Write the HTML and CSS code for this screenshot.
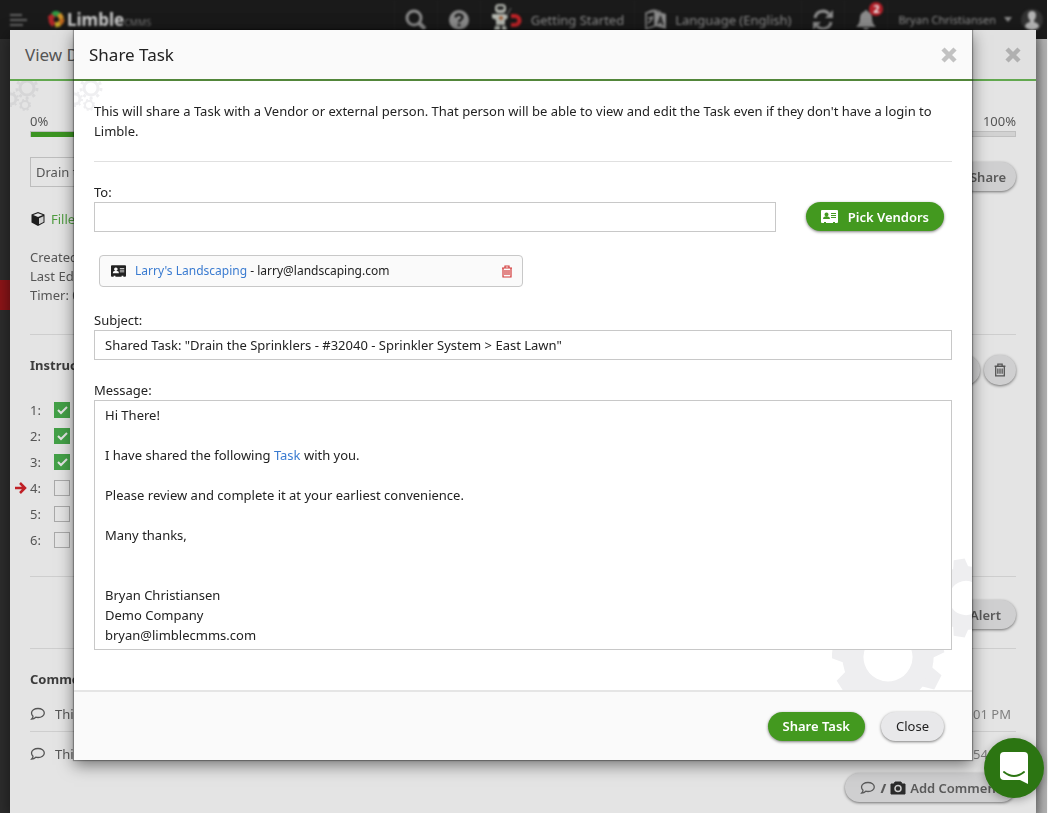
FILE: index.html
```html
<!DOCTYPE html>
<html lang="en">
<head>
  <meta charset="UTF-8">
  <meta name="viewport" content="width=device-width, initial-scale=1">
  <title>Limble CMMS - Share Task</title>
  <link rel="stylesheet" href="styles.css">
</head>
<body>
  <!-- Shared icons -->
  <svg class="icon-defs" aria-hidden="true">
    <symbol id="gear-big" viewBox="-60 -60 120 120">
      <circle r="35" fill="none" stroke="currentColor" stroke-width="21"/>
      <g fill="currentColor">
        <path id="tooth" d="M43-11 56-8V8L43 11z"/>
        <use href="#tooth" transform="rotate(40)"/>
        <use href="#tooth" transform="rotate(80)"/>
        <use href="#tooth" transform="rotate(120)"/>
        <use href="#tooth" transform="rotate(160)"/>
        <use href="#tooth" transform="rotate(200)"/>
        <use href="#tooth" transform="rotate(240)"/>
        <use href="#tooth" transform="rotate(280)"/>
        <use href="#tooth" transform="rotate(320)"/>
      </g>
    </symbol>
    <symbol id="gears-small" viewBox="0 0 36 32">
      <g fill="none" stroke="currentColor">
        <circle cx="17" cy="7" r="7" stroke-width="3"/>
        <circle cx="17" cy="7" r="10" stroke-width="3" stroke-dasharray="3 4"/>
        <circle cx="1" cy="18" r="5" stroke-width="3"/>
        <circle cx="1" cy="18" r="7" stroke-width="2" stroke-dasharray="2 3"/>
        <circle cx="15" cy="24" r="4" stroke-width="2"/>
        <circle cx="15" cy="24" r="5" stroke-width="2" stroke-dasharray="2 2"/>
      </g>
    </symbol>
    <symbol id="times" viewBox="0 0 16 16">
      <path d="M2 2l12 12M14 2L2 14" stroke="currentColor" stroke-width="4.500"/>
    </symbol>
    <symbol id="card" viewBox="0 0 17 13">
      <path fill="currentColor" fill-rule="evenodd" d="M1 0h15q1 0 1 1v11q0 1-1 1h-2v-1h-2v1H5v-1H3v1H1q-1 0-1-1V1q0-1 1-1zM5.500 2.500a2 2 0 1 0 .01 0zM2 9h7q0-2.500-2-2.500H4Q2 6.500 2 9zM10 3h5v1h-5zM10 5h5v1h-5zM10 7h5v1h-5z"/>
    </symbol>
    <symbol id="trash" viewBox="0 0 12 13">
      <path d="M1 3h10M4 3V1h4v2M2 3v9h8V3M4 5v5M6 5v5M8 5v5" fill="none" stroke="currentColor" stroke-width="1.200"/>
    </symbol>
    <symbol id="comment" viewBox="0 0 16 14">
      <path d="M8 1.500c3.600 0 6.300 2 6.300 4.500S11.600 10.500 8 10.500c-.8 0-1.500-.1-2.200-.3C4.800 11.200 3.400 12 1.700 12c.8-.8 1.300-1.700 1.300-2.800C2 8.300 1.500 7.200 1.500 6 1.500 3.500 4.400 1.500 8 1.500z" fill="none" stroke="currentColor" stroke-width="1.300"/>
    </symbol>
  </svg>

  <header class="topbar">
    <button class="menu-btn" type="button" aria-label="Menu">
      <svg width="17" height="12" viewBox="0 0 17 12"><path d="M0 1h12M0 6h17M0 11h13" stroke="currentColor" stroke-width="2"/></svg>
    </button>
    <a class="logo" href="#">
      <svg width="17" height="17" viewBox="0 0 17 17" fill="none" stroke-width="5">
        <path d="M6 14Q3 12 3 8" stroke="#b3262a"/>
        <path d="M1 8l5-4" stroke="#b3262a"/>
        <path d="M5 4q3-3 6 0" stroke="#2f9a45"/>
        <path d="M11 3l3 5" stroke="#d0922a"/>
        <path d="M14 8q0 3-3 5" stroke="#c06a1f"/>
        <path d="M7 14l5-1" stroke="#c9a92a"/>
      </svg>
      <span class="logo-name">Limble</span><span class="logo-sub">CMMS</span>
    </a>
    <nav class="topnav">
      <a href="#" aria-label="Search">
        <svg width="22" height="22" viewBox="0 0 22 22" fill="none" stroke="currentColor"><circle cx="9" cy="9" r="7" stroke-width="3"/><path d="M14 14l6 6" stroke-width="4"/></svg>
      </a>
      <a href="#" aria-label="Help">
        <svg width="22" height="22" viewBox="0 0 22 22"><circle cx="11" cy="11" r="10" fill="currentColor"/><path d="M7.500 8.500q.5-3 3.500-3t3.500 2.700q0 1.600-2 2.800-1.500.9-1.500 2.200" fill="none" stroke="#1a1a1a" stroke-width="2.400"/><path d="M9.700 14.800h2.600v2.400H9.700z" fill="#1a1a1a"/></svg>
      </a>
      <a href="#">
        <svg width="32" height="32" viewBox="0 0 32 32">
          <g fill="#b4b7b0"><rect x="4" y="0" width="11" height="9" rx="4"/><path d="M5 10h9l3 2-1 3-2 1v5H5v-5l-4-2v-4h4zM4 22h5v5H3zM11 22h4l1 5h-5z"/></g>
          <rect x="6" y="2" width="7" height="4" rx="2" fill="#2a2a2a"/>
          <circle cx="10" cy="14" r="2" fill="#a0603c"/>
          <path d="M16 11l4-7" stroke="#555" stroke-width="1.500"/>
          <path d="M20 12h4a4 4 0 0 1 0 9h-4" fill="none" stroke="#c02428" stroke-width="4"/>
        </svg>
        <span>Getting Started</span>
      </a>
      <a href="#">
        <svg width="22" height="22" viewBox="0 0 22 22"><path d="M1 4l9-2v15l-9 3z" fill="none" stroke="currentColor" stroke-width="1.500"/><path d="M3 9h5M7 7q0 5-4 7" fill="none" stroke="currentColor" stroke-width="1.500"/><path d="M10 2l11 3v15l-11-3z" fill="currentColor"/><path d="M13 15l2.500-7 2.500 8M14 13h3" fill="none" stroke="#1a1a1a" stroke-width="1.500"/><path d="M3 3q5-4 13 0" fill="none" stroke="currentColor"/></svg>
        <span>Language (English)</span>
      </a>
      <a href="#" aria-label="Refresh">
        <svg width="22" height="22" viewBox="0 0 22 22"><path d="M3 9a8 8 0 0 1 14-4M19 13a8 8 0 0 1-14 4" fill="none" stroke="currentColor" stroke-width="3"/><path d="M21 1v8h-8zM1 21v-8h8z" fill="currentColor"/></svg>
      </a>
      <a class="bell" href="#" aria-label="Notifications">
        <svg width="22" height="22" viewBox="0 0 22 22"><path d="M11 1q1.500 0 1.500 1.600Q17 4 17 9q0 6 4 9H1q4-3 4-9 0-5 4.500-6.400Q9.500 1 11 1zM8 19h6q-1 3-3 3t-3-3z" fill="currentColor"/></svg>
        <span class="badge">2</span>
      </a>
      <a class="user" href="#">
        <span>Bryan Christiansen</span>
        <svg width="8" height="5" viewBox="0 0 8 5"><path d="M0 0h8L4 5z" fill="currentColor"/></svg>
        <svg class="avatar" width="24" height="24" viewBox="0 0 24 24"><circle cx="12" cy="12" r="11" fill="#333"/><path d="M12 3q4 0 4 4.500 0 3-2 5v1.500q5 1 5 5Q16 22 12 22t-7-3q0-4 5-5v-1.500q-2-2-2-5Q8 3 12 3z" fill="#b4b4b4"/></svg>
      </a>
    </nav>
  </header>
  <aside class="sidebar"><div class="sidebar-active"></div></aside>

  <!-- Task behind the share dialog -->
  <div class="overlay overlay-view">
    <section class="modal view-modal">
      <div class="modal-header">
        <h2>View D</h2>
        <button class="close-x" type="button" aria-label="Close task"><svg width="16" height="16"><use href="#times"/></svg></button>
      </div>
      <div class="view-body">
        <svg class="gears-corner" width="36" height="32"><use href="#gears-small"/></svg>
        <div class="progress-labels"><span>0%</span><span>100%</span></div>
        <div class="progress"><div class="progress-done"></div></div>
        <div class="title-row">
          <input class="title-input" type="text" value="Drain the Sprinklers" aria-label="Task name">
          <button class="btn btn-dim" type="button">Share</button>
        </div>
        <div class="filled">
          <svg width="16" height="16" viewBox="0 0 16 16"><path d="M8 1l6.500 2.500v8L8 15l-6.500-3.500v-8z" fill="#1d1d1d"/><path d="M8 2.200l4.800 1.800L8 6 3.200 4z" fill="#e4e4e4"/><path d="M9 7.300l4.500-2v5.600L9 13.300z" fill="#d0d0d0"/></svg>
          <span>Filled</span>
        </div>
        <div class="meta">
          <div>Created</div>
          <div>Last Edited</div>
          <div>Timer: 0</div>
        </div>
        <hr>
        <div class="instructions-head">
          <h3>Instructions</h3>
          <div class="round-btns">
            <button class="btn-round" type="button" aria-label="Edit instructions"></button>
            <button class="btn-round" type="button" aria-label="Delete instructions"><svg width="14" height="14"><use href="#trash"/></svg></button>
          </div>
        </div>
        <ol class="steps">
          <li><label for="step1">1:</label><input id="step1" type="checkbox" checked></li>
          <li><label for="step2">2:</label><input id="step2" type="checkbox" checked></li>
          <li><label for="step3">3:</label><input id="step3" type="checkbox" checked></li>
          <li><svg class="arrow" width="12" height="12" viewBox="0 0 12 12"><path d="M0 6h10M5 1l5 5-5 5" fill="none" stroke="#c02026" stroke-width="2.500"/></svg><label for="step4">4:</label><input id="step4" type="checkbox"></li>
          <li><label for="step5">5:</label><input id="step5" type="checkbox"></li>
          <li><label for="step6">6:</label><input id="step6" type="checkbox"></li>
        </ol>
        <hr>
        <div class="alert-row"><button class="btn btn-dim" type="button">Alert</button></div>
        <hr>
        <h3>Comments</h3>
        <div class="comment">
          <svg width="16" height="14"><use href="#comment"/></svg>
          <span>This</span>
          <time>01 PM</time>
        </div>
        <div class="comment">
          <svg width="16" height="14"><use href="#comment"/></svg>
          <span>This</span>
          <time>54 PM</time>
        </div>
        <div class="add-row">
          <button class="btn btn-dim" type="button">
            <svg width="16" height="14"><use href="#comment"/></svg>
            <b>/</b>
            <svg width="16" height="14" viewBox="0 0 16 14"><path d="M1 3h3l1-2h6l1 2h3v10H1z" fill="#2b2b2b" stroke="#2b2b2b" stroke-linejoin="round"/><circle cx="8" cy="7.500" r="3" fill="none" stroke="#ccc" stroke-width="1.500"/></svg>
            <span>Add Comment</span>
          </button>
        </div>
      </div>
    </section>
  </div>

  <div class="overlay overlay-share">
    <section class="modal share-modal" role="dialog" aria-labelledby="share-title">
      <div class="modal-header">
        <h2 id="share-title">Share Task</h2>
        <button class="close-x" type="button" aria-label="Close"><svg width="16" height="16"><use href="#times"/></svg></button>
      </div>
      <form class="share-body" id="share-form">
        <svg class="gears-corner" width="36" height="32"><use href="#gears-small"/></svg>
        <svg class="gears-bottom" width="140" height="132" viewBox="0 0 140 132">
          <g transform="translate(56 99) rotate(27)"><use href="#gear-big" x="-60" y="-60" width="120" height="120"/></g>
          <g transform="translate(134 40) rotate(20) scale(0.7)"><use href="#gear-big" x="-60" y="-60" width="120" height="120"/></g>
        </svg>
        <p class="intro">This will share a Task with a Vendor or external person. That person will be able to view and edit the Task even if they don't have a login to Limble.</p>
        <hr>
        <div class="to-row">
          <div class="field">
            <label for="to">To:</label>
            <input id="to" type="text">
          </div>
          <button class="btn btn-green" type="button">
            <svg width="17" height="13"><use href="#card"/></svg>
            <span>Pick Vendors</span>
          </button>
        </div>
        <div class="recipient">
          <svg width="15" height="12"><use href="#card"/></svg>
          <span><a href="#">Larry's Landscaping</a> - larry@landscaping.com</span>
          <button class="remove" type="button" aria-label="Remove recipient"><svg width="12" height="13"><use href="#trash"/></svg></button>
        </div>
        <div class="field">
          <label for="subject">Subject:</label>
          <input id="subject" type="text" value="Shared Task: &quot;Drain the Sprinklers - #32040 - Sprinkler System &gt; East Lawn&quot;">
        </div>
        <div class="field">
          <label id="message-label">Message:</label>
          <div class="message" contenteditable="true" role="textbox" aria-multiline="true" aria-labelledby="message-label">
            <div>Hi There!</div>
            <div><br></div>
            <div>I have shared the following <a href="#">Task</a> with you.</div>
            <div><br></div>
            <div>Please review and complete it at your earliest convenience.</div>
            <div><br></div>
            <div>Many thanks,</div>
            <div><br></div>
            <div><br></div>
            <div>Bryan Christiansen</div>
            <div>Demo Company</div>
            <div>bryan@limblecmms.com</div>
          </div>
        </div>
      </form>
      <div class="modal-footer">
        <button class="btn btn-green" type="submit" form="share-form">Share Task</button>
        <button class="btn btn-grey" type="button">Close</button>
      </div>
    </section>
  </div>

  <button class="chat" type="button" aria-label="Open chat">
    <svg width="28" height="33" viewBox="0 0 28 33"><path d="M4 0h20q4 0 4 4v28l-8-4H4q-4 0-4-4V4q0-4 4-4z" fill="#fff"/><path d="M4 20q10 8 20 0" fill="none" stroke="#2c7512" stroke-width="2" stroke-linecap="round"/></svg>
  </button>
</body>
</html>
```
FILE: styles.css
```css
* {
  box-sizing: border-box;
}
body {
  margin: 0;
  min-height: 100vh;
  font-family: "Noto Sans", "Open Sans", sans-serif;
  font-size: 13px;
  line-height: 20px;
  color: #333;
  background: linear-gradient(to left, #fff 1px, #b4b4b4 1px, #b4b4b4 5px, #9c9c9c 12px);
  overflow: hidden;
}
input,
button {
  font: inherit;
  color: inherit;
}
button {
  cursor: pointer;
}
a {
  color: #3a7bd0;
  text-decoration: none;
}
hr {
  height: 1px;
  margin: 0;
  border: 0;
  background-color: #e0e0e0;
}
h2 {
  margin: 0;
  font-size: 17px;
  font-weight: 400;
  line-height: 24px;
}
h3 {
  margin: 0;
  font-size: 13px;
  font-weight: 700;
}
.icon-defs {
  position: absolute;
  width: 0;
  height: 0;
}

/* Top bar */
.topbar {
  display: flex;
  align-items: center;
  height: 39px;
  margin-right: 1px;
  padding-left: 10px;
  background-color: #1a1a1a;
  color: #757575;
}
.topbar > * {
  filter: blur(1px);
}
.menu-btn {
  display: flex;
  padding: 0;
  border: 0;
  background: none;
  color: #666;
}
.logo {
  display: flex;
  align-items: center;
  margin-left: 21px;
  color: #d0d0d0;
}
.logo-name {
  margin-left: 2px;
  font-size: 17px;
  font-weight: 700;
}
.logo-sub {
  padding-top: 6px;
  font-size: 9px;
  color: #777;
}
.topnav {
  display: flex;
  height: 100%;
  margin-left: auto;
}
.topnav a {
  display: flex;
  align-items: center;
  gap: 8px;
  padding: 0 10px;
  border-left: 1px solid #222;
  color: #8c8c8c;
}
.topnav a span {
  white-space: nowrap;
}
.topnav .bell {
  position: relative;
}
.topnav .badge {
  position: absolute;
  top: 2px;
  right: 4px;
  width: 14px;
  height: 14px;
  border-radius: 7px;
  background-color: #b01f28;
  color: #eee;
  font-size: 11px;
  font-weight: 700;
  line-height: 14px;
  text-align: center;
}
.topnav .user {
  padding-right: 3px;
  font-size: 11px;
}

/* Side bar */
.sidebar {
  width: 10px;
  height: calc(100vh - 39px);
  padding-top: 241px;
  background-color: #2d2d2d;
}
.sidebar-active {
  height: 30px;
  background-color: #8e1518;
}

/* Modals */
.overlay {
  position: fixed;
  top: 0;
  right: 0;
  bottom: 0;
  left: 0;
  display: flex;
  align-items: flex-start;
}
.overlay-view {
  align-items: stretch;
  padding: 30px 12px 0 10px;
}
.overlay-share {
  padding: 30px 76px 0 74px;
}
.modal {
  flex: 1;
  min-width: 0;
  box-shadow: 0 5px 15px rgba(0, 0, 0, 0.5);
}
.modal-header {
  display: flex;
  align-items: center;
  justify-content: space-between;
  height: 51px;
  padding: 0 15px;
  border-bottom: 2px solid #52863a;
  background-color: #fafafa;
}
.close-x {
  display: flex;
  padding: 0;
  border: 0;
  background: none;
  color: #c2c2c2;
}
.gears-corner {
  position: absolute;
  top: 0;
  left: 0;
  color: #efeff1;
}

/* Buttons */
.btn {
  display: inline-flex;
  align-items: center;
  justify-content: center;
  gap: 10px;
  height: 29px;
  padding: 0 15px;
  border: 0;
  border-radius: 15px;
  font-weight: 600;
  white-space: nowrap;
  box-shadow: 0 1px 3px rgba(0, 0, 0, 0.5);
}
.btn-green {
  background-color: #43991f;
  color: #fff;
}
.btn-grey {
  background-color: #e8e8ea;
  color: #222;
  font-weight: 400;
}
.btn-dim {
  background-color: #cfcfd0;
  color: #5a5a5a;
}

/* Task view */
.view-modal {
  background-color: #e4e4e4;
  color: #555;
}
.view-modal .modal-header {
  background-color: #e1e1e1;
  border-bottom-color: #62a84f;
}
.view-modal .close-x {
  color: #b0b0b0;
}
.view-body {
  position: relative;
  padding: 30px 20px 0;
}
.view-body .gears-corner {
  color: #d6d6d7;
}
.view-body hr {
  background-color: #cecece;
}
.view-body h3 {
  color: #3c3c3c;
}
.progress-labels {
  display: flex;
  justify-content: space-between;
}
.progress {
  height: 6px;
  border: 1px solid #c0c0c0;
  background-color: #d2d2d2;
}
.progress-done {
  width: 50%;
  height: 5px;
  background-color: #3c9422;
}
.title-row {
  display: flex;
  justify-content: space-between;
  align-items: flex-start;
  margin-top: 20px;
}
.title-input {
  width: 300px;
  height: 30px;
  padding: 0 5px;
  border: 1px solid #bdbdbd;
  background-color: transparent;
}
.title-row .btn {
  margin-top: 5px;
  padding: 0 10px;
}
.filled {
  display: flex;
  align-items: center;
  gap: 5px;
  margin-top: 18px;
  color: #4f9c40;
}
.meta {
  margin: 19px 0 29px;
  line-height: 19px;
}
.instructions-head {
  display: flex;
  justify-content: space-between;
  margin-top: 20px;
}
.round-btns {
  display: flex;
  gap: 4px;
}
.btn-round {
  display: flex;
  align-items: center;
  justify-content: center;
  width: 32px;
  height: 30px;
  padding: 0;
  border: 0;
  border-radius: 15px;
  background-color: #cfcfd0;
  box-shadow: 0 1px 3px rgba(0, 0, 0, 0.5);
}
.steps {
  margin: 12px 0 23px;
  padding: 0;
  list-style: none;
}
.steps li {
  position: relative;
  display: flex;
  align-items: center;
  height: 26px;
}
.steps label {
  width: 24px;
}
.steps input {
  appearance: none;
  width: 16px;
  height: 16px;
  margin: 0;
  border: 1px solid #a9a9a9;
}
.steps input:checked {
  border-color: #43a047;
  background: #43a047 url("data:image/svg+xml,%3Csvg xmlns='http://www.w3.org/2000/svg' viewBox='0 0 14 14'%3E%3Cpath d='M3 7l3 3 6-6' fill='none' stroke='%23e4e4e4' stroke-width='2'/%3E%3C/svg%3E");
}
.steps .arrow {
  position: absolute;
  left: -15px;
}
.alert-row {
  display: flex;
  justify-content: flex-end;
  margin: 23px 0 19px;
}
.view-body > h3 {
  margin-top: 20px;
}
.comment {
  display: flex;
  align-items: center;
  gap: 9px;
  padding: 12px 5px 7px 0;
}
.comment + .comment {
  border-top: 1px solid #cecece;
}
.view-body > h3 + .comment {
  padding-top: 15px;
}
.comment time {
  margin-left: auto;
  color: #808080;
}
.add-row {
  display: flex;
  justify-content: flex-end;
  margin-top: 2px;
}
.add-row .btn {
  gap: 4px;
}

/* Share dialog */
.share-modal {
  background-color: #fff;
  color: #222;
  box-shadow: 0 5px 15px rgba(0, 0, 0, 0.5), 0 0 1px 1px rgba(0, 0, 0, 0.3);
}
.share-body {
  position: relative;
  padding: 20px 20px 40px;
}
.share-body > * {
  position: relative;
}
.share-body > .gears-corner,
.share-body > .gears-bottom {
  position: absolute;
}
.gears-bottom {
  right: 0;
  bottom: 0;
  color: #eeeef0;
}
.intro {
  margin: 0 0 20px;
}
.to-row {
  display: flex;
  align-items: flex-end;
  gap: 30px;
  margin-top: 20px;
  padding-right: 8px;
}
.to-row .field {
  flex: 1;
}
.to-row .btn {
  margin-bottom: 1px;
}
.field label {
  display: block;
}
.field input {
  display: block;
  width: 100%;
  height: 30px;
  padding: 0 10px;
  border: 1px solid #c8c8c8;
  background-color: #fff;
}
.recipient {
  display: flex;
  align-items: center;
  gap: 9px;
  width: 50%;
  max-width: 424px;
  height: 32px;
  margin: 23px 5px;
  padding: 0 9px 0 11px;
  border: 1px solid #c8c8c8;
  border-radius: 4px;
  background-color: #fafafa;
  font-size: 12px;
}
.remove {
  display: flex;
  margin-left: auto;
  padding: 0;
  border: 0;
  background: none;
  color: #d33b3b;
}
.field + .field {
  margin-top: 20px;
}
.message {
  min-height: 250px;
  padding: 4px 10px;
  border: 1px solid #c8c8c8;
  background-color: #fff;
}
.modal-footer {
  display: flex;
  align-items: center;
  justify-content: flex-end;
  gap: 16px;
  height: 70px;
  padding: 0 28px;
  border-top: 2px solid #e5e5e5;
  background-color: #fafafa;
}

/* Chat bubble */
.chat {
  position: fixed;
  right: 4px;
  bottom: 15px;
  display: flex;
  align-items: center;
  justify-content: center;
  width: 60px;
  height: 60px;
  padding: 0;
  border: 0;
  border-radius: 50%;
  background-color: #2c7512;
  box-shadow: 0 2px 8px rgba(0, 0, 0, 0.3);
}
```
